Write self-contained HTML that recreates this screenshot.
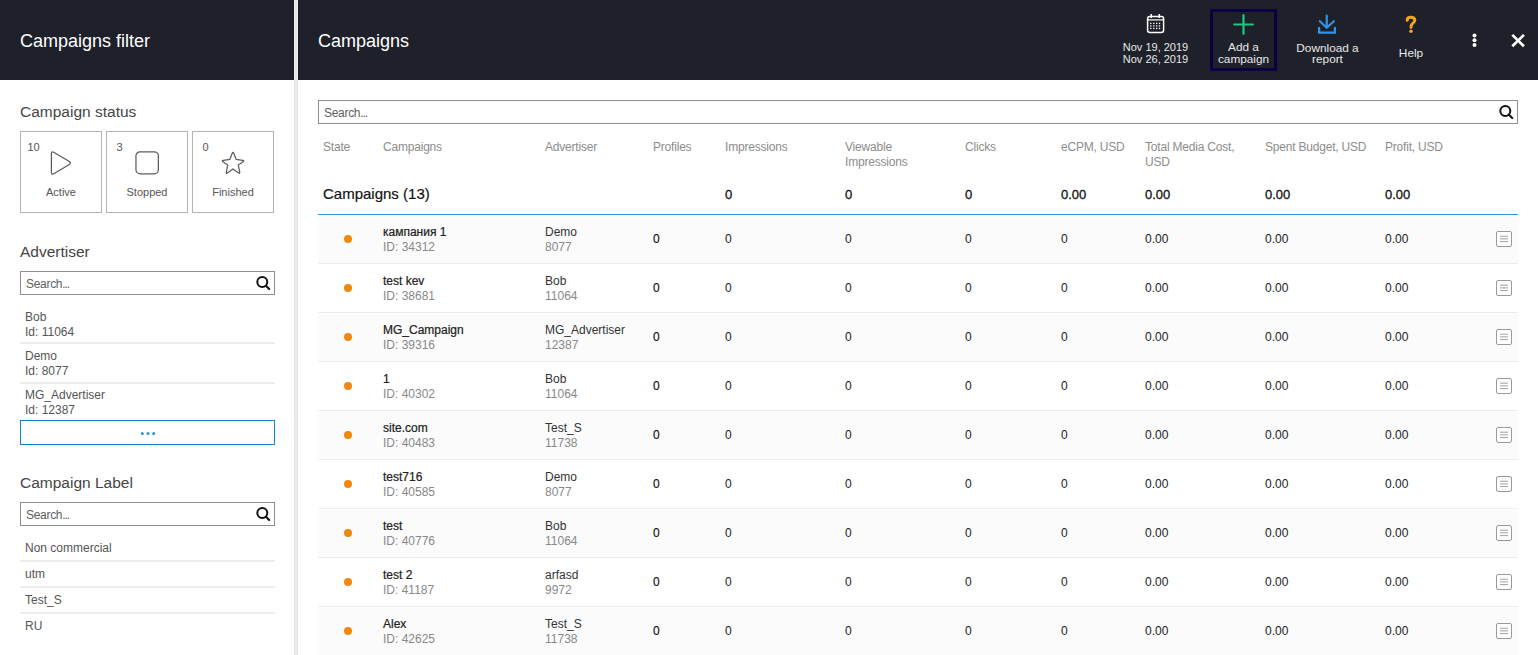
<!DOCTYPE html>
<html><head><meta charset="utf-8"><style>
html,body{margin:0;padding:0;background:#fff;width:1538px;height:655px;overflow:hidden}
body{position:relative;font-family:"Liberation Sans",sans-serif}
.a{position:absolute}
.t{position:absolute;white-space:nowrap}
.tc{position:absolute;white-space:nowrap;text-align:center}
</style></head><body>
<div class="a" style="left:0px;top:0px;width:294px;height:80px;background:#1e212a"></div>
<div class="a" style="left:294px;top:0px;width:4px;height:655px;background:#e9e9e9"></div>
<div class="a" style="left:298px;top:0px;width:1240px;height:80px;background:#1e212a"></div>
<div class="t" style="left:20px;top:30.41px;font-size:18px;line-height:22.5px;color:#fff;font-weight:400;">Campaigns filter</div>
<div class="t" style="left:318px;top:30.41px;font-size:18px;line-height:22.5px;color:#fff;font-weight:400;">Campaigns</div>
<div class="t" style="left:20px;top:101.94px;font-size:15.5px;line-height:19.38px;color:#454545;font-weight:400;">Campaign status</div>
<div class="a" style="left:20px;top:131px;width:82px;height:82px;box-sizing:border-box;border:1px solid #b4b4b4"></div>
<div class="tc" style="left:23.5px;width:20px;top:141.31px;font-size:11px;line-height:13.75px;color:#555">10</div>
<div class="tc" style="left:20px;width:82px;top:186.11px;font-size:11px;line-height:13.75px;color:#555">Active</div>
<svg class="a" style="left:49px;top:149px" width="24" height="28" viewBox="0 0 24 28"><path d="M2.4 4.6 Q2.4 2 4.7 3.3 L20.4 12.5 Q22.3 14 20.4 15.5 L4.7 24.7 Q2.4 26 2.4 23.4 Z" fill="none" stroke="#5c5c5c" stroke-width="1.25"/></svg>
<div class="a" style="left:106px;top:131px;width:82px;height:82px;box-sizing:border-box;border:1px solid #b4b4b4"></div>
<div class="tc" style="left:109.5px;width:20px;top:141.31px;font-size:11px;line-height:13.75px;color:#555">3</div>
<div class="tc" style="left:106px;width:82px;top:186.11px;font-size:11px;line-height:13.75px;color:#555">Stopped</div>
<svg class="a" style="left:134px;top:149px" width="26" height="28" viewBox="0 0 26 28"><rect x="1.95" y="2.85" width="22.4" height="21.9" rx="4" fill="none" stroke="#5c5c5c" stroke-width="1.25"/></svg>
<div class="a" style="left:192px;top:131px;width:82px;height:82px;box-sizing:border-box;border:1px solid #b4b4b4"></div>
<div class="tc" style="left:195.5px;width:20px;top:141.31px;font-size:11px;line-height:13.75px;color:#555">0</div>
<div class="tc" style="left:192px;width:82px;top:186.11px;font-size:11px;line-height:13.75px;color:#555">Finished</div>
<svg class="a" style="left:219px;top:149px" width="28" height="28" viewBox="0 0 28 28"><path d="M13.22 4.30Q14 2.3 14.78 4.30L17.1 10.3L23.55 11.43Q25.7 11.8 24.10 12.85L19.3 16L20.65 22.83Q21.1 25.1 19.33 23.80L14 19.9L8.68 23.80Q6.9 25.1 7.35 22.83L8.7 16L3.90 12.85Q2.3 11.8 4.45 11.43L10.9 10.3Z" fill="none" stroke="#5c5c5c" stroke-width="1.25" stroke-linejoin="round"/></svg>
<div class="t" style="left:20px;top:241.94px;font-size:15.5px;line-height:19.38px;color:#454545;font-weight:400;">Advertiser</div>
<div class="a" style="left:20px;top:271px;width:255px;height:24px;box-sizing:border-box;border:1px solid #8f8f8f;background:#fff"></div><div class="t" style="left:26px;top:277.34px;font-size:12px;line-height:15.0px;color:#606060;font-weight:400;"><span style="letter-spacing:-0.3px">Search</span><span style="letter-spacing:-1.1px">..</span>.</div><svg class="a" style="left:255px;top:276px" width="16" height="15" viewBox="0 0 16 15"><circle cx="7.3" cy="6.1" r="5.0" fill="none" stroke="#111" stroke-width="2"/><path d="M10.9 9.7 L14.2 13" stroke="#111" stroke-width="2.1" stroke-linecap="round"/></svg>
<div class="t" style="left:25px;top:310.34px;font-size:12px;line-height:15.0px;color:#555;font-weight:400;">Bob</div>
<div class="t" style="left:25px;top:325.34px;font-size:12px;line-height:15.0px;color:#555;font-weight:400;">Id: 11064</div>
<div class="a" style="left:20px;top:342px;width:255px;height:2px;background:#ededed"></div>
<div class="t" style="left:25px;top:348.74px;font-size:12px;line-height:15.0px;color:#555;font-weight:400;">Demo</div>
<div class="t" style="left:25px;top:363.84px;font-size:12px;line-height:15.0px;color:#555;font-weight:400;">Id: 8077</div>
<div class="a" style="left:20px;top:381.5px;width:255px;height:2px;background:#ededed"></div>
<div class="t" style="left:25px;top:387.74px;font-size:12px;line-height:15.0px;color:#555;font-weight:400;">MG_Advertiser</div>
<div class="t" style="left:25px;top:403.34px;font-size:12px;line-height:15.0px;color:#555;font-weight:400;">Id: 12387</div>
<div class="a" style="left:20px;top:420px;width:255px;height:25px;box-sizing:border-box;border:1px solid #0a86cf"></div>
<svg class="a" style="left:139px;top:430px" width="18" height="6"><circle cx="3.3" cy="3.5" r="1.5" fill="#3590dc"/><circle cx="9" cy="3.5" r="1.5" fill="#3590dc"/><circle cx="14.7" cy="3.5" r="1.5" fill="#3590dc"/></svg>
<div class="t" style="left:20px;top:472.94px;font-size:15.5px;line-height:19.38px;color:#454545;font-weight:400;">Campaign Label</div>
<div class="a" style="left:20px;top:502px;width:255px;height:24px;box-sizing:border-box;border:1px solid #8f8f8f;background:#fff"></div><div class="t" style="left:26px;top:508.34px;font-size:12px;line-height:15.0px;color:#606060;font-weight:400;"><span style="letter-spacing:-0.3px">Search</span><span style="letter-spacing:-1.1px">..</span>.</div><svg class="a" style="left:255px;top:507px" width="16" height="15" viewBox="0 0 16 15"><circle cx="7.3" cy="6.1" r="5.0" fill="none" stroke="#111" stroke-width="2"/><path d="M10.9 9.7 L14.2 13" stroke="#111" stroke-width="2.1" stroke-linecap="round"/></svg>
<div class="t" style="left:25px;top:541.34px;font-size:12px;line-height:15.0px;color:#555;font-weight:400;">Non commercial</div>
<div class="a" style="left:20px;top:560px;width:255px;height:2px;background:#ededed"></div>
<div class="t" style="left:25px;top:567.34px;font-size:12px;line-height:15.0px;color:#555;font-weight:400;">utm</div>
<div class="a" style="left:20px;top:586px;width:255px;height:2px;background:#ededed"></div>
<div class="t" style="left:25px;top:592.94px;font-size:12px;line-height:15.0px;color:#555;font-weight:400;">Test_S</div>
<div class="a" style="left:20px;top:612px;width:255px;height:2px;background:#ededed"></div>
<div class="t" style="left:25px;top:619.34px;font-size:12px;line-height:15.0px;color:#555;font-weight:400;">RU</div>
<div class="a" style="left:318px;top:100px;width:1200px;height:24px;box-sizing:border-box;border:1px solid #8f8f8f;background:#fff"></div><div class="t" style="left:324px;top:106.34px;font-size:12px;line-height:15.0px;color:#606060;font-weight:400;"><span style="letter-spacing:-0.3px">Search</span><span style="letter-spacing:-1.1px">..</span>.</div><svg class="a" style="left:1498px;top:105px" width="16" height="15" viewBox="0 0 16 15"><circle cx="7.3" cy="6.1" r="5.0" fill="none" stroke="#111" stroke-width="2"/><path d="M10.9 9.7 L14.2 13" stroke="#111" stroke-width="2.1" stroke-linecap="round"/></svg>
<div class="t" style="left:323px;top:139.94px;font-size:12px;line-height:15px;color:#8c8c8c;font-weight:400;letter-spacing:-0.2px">State</div>
<div class="t" style="left:383px;top:139.94px;font-size:12px;line-height:15px;color:#8c8c8c;font-weight:400;letter-spacing:-0.2px">Campaigns</div>
<div class="t" style="left:545px;top:139.94px;font-size:12px;line-height:15px;color:#8c8c8c;font-weight:400;letter-spacing:-0.2px">Advertiser</div>
<div class="t" style="left:653px;top:139.94px;font-size:12px;line-height:15px;color:#8c8c8c;font-weight:400;letter-spacing:-0.2px">Profiles</div>
<div class="t" style="left:725px;top:139.94px;font-size:12px;line-height:15px;color:#8c8c8c;font-weight:400;letter-spacing:-0.2px">Impressions</div>
<div class="t" style="left:845px;top:139.94px;font-size:12px;line-height:15px;color:#8c8c8c;font-weight:400;letter-spacing:-0.2px">Viewable<br>Impressions</div>
<div class="t" style="left:965px;top:139.94px;font-size:12px;line-height:15px;color:#8c8c8c;font-weight:400;letter-spacing:-0.2px">Clicks</div>
<div class="t" style="left:1061px;top:139.94px;font-size:12px;line-height:15px;color:#8c8c8c;font-weight:400;letter-spacing:-0.2px">eCPM, USD</div>
<div class="t" style="left:1145px;top:139.94px;font-size:12px;line-height:15px;color:#8c8c8c;font-weight:400;letter-spacing:-0.2px">Total Media Cost,<br>USD</div>
<div class="t" style="left:1265px;top:139.94px;font-size:12px;line-height:15px;color:#8c8c8c;font-weight:400;letter-spacing:-0.2px">Spent Budget, USD</div>
<div class="t" style="left:1385px;top:139.94px;font-size:12px;line-height:15px;color:#8c8c8c;font-weight:400;letter-spacing:-0.2px">Profit, USD</div>
<div class="t" style="left:323px;top:184.93px;font-size:15px;line-height:18.75px;color:#111;font-weight:400;-webkit-text-stroke:0.18px #111">Campaigns (13)</div>
<div class="t" style="left:725px;top:186.87px;font-size:13px;line-height:16.25px;color:#111;font-weight:400;-webkit-text-stroke:0.3px #111">0</div>
<div class="t" style="left:845px;top:186.87px;font-size:13px;line-height:16.25px;color:#111;font-weight:400;-webkit-text-stroke:0.3px #111">0</div>
<div class="t" style="left:965px;top:186.87px;font-size:13px;line-height:16.25px;color:#111;font-weight:400;-webkit-text-stroke:0.3px #111">0</div>
<div class="t" style="left:1061px;top:186.87px;font-size:13px;line-height:16.25px;color:#111;font-weight:400;-webkit-text-stroke:0.3px #111">0.00</div>
<div class="t" style="left:1145px;top:186.87px;font-size:13px;line-height:16.25px;color:#111;font-weight:400;-webkit-text-stroke:0.3px #111">0.00</div>
<div class="t" style="left:1265px;top:186.87px;font-size:13px;line-height:16.25px;color:#111;font-weight:400;-webkit-text-stroke:0.3px #111">0.00</div>
<div class="t" style="left:1385px;top:186.87px;font-size:13px;line-height:16.25px;color:#111;font-weight:400;-webkit-text-stroke:0.3px #111">0.00</div>
<div class="a" style="left:318px;top:214px;width:1200px;height:1px;background:#3595dc"></div>
<div class="a" style="left:318px;top:216px;width:1200px;height:47px;background:#fbfbfb"></div>
<div class="a" style="left:318px;top:263px;width:1200px;height:1px;background:#ececec"></div>
<div class="a" style="left:344px;top:235px;width:8px;height:8px;border-radius:50%;background:#f0870f"></div>
<div class="t" style="left:383px;top:225.34px;font-size:12px;line-height:15.0px;color:#222;font-weight:400;-webkit-text-stroke:0.22px #222">кампания 1</div>
<div class="t" style="left:383px;top:240.04px;font-size:12px;line-height:15.0px;color:#888;font-weight:400;">ID: 34312</div>
<div class="t" style="left:545px;top:225.04px;font-size:12px;line-height:15.0px;color:#333;font-weight:400;">Demo</div>
<div class="t" style="left:545px;top:240.04px;font-size:12px;line-height:15.0px;color:#888;font-weight:400;">8077</div>
<div class="t" style="left:653px;top:232.04px;font-size:12px;line-height:15.0px;color:#111;font-weight:400;-webkit-text-stroke:0.15px #111">0</div>
<div class="t" style="left:725px;top:232.04px;font-size:12px;line-height:15.0px;color:#222;font-weight:400;">0</div>
<div class="t" style="left:845px;top:232.04px;font-size:12px;line-height:15.0px;color:#222;font-weight:400;">0</div>
<div class="t" style="left:965px;top:232.04px;font-size:12px;line-height:15.0px;color:#222;font-weight:400;">0</div>
<div class="t" style="left:1061px;top:232.04px;font-size:12px;line-height:15.0px;color:#222;font-weight:400;">0</div>
<div class="t" style="left:1145px;top:232.04px;font-size:12px;line-height:15.0px;color:#222;font-weight:400;">0.00</div>
<div class="t" style="left:1265px;top:232.04px;font-size:12px;line-height:15.0px;color:#222;font-weight:400;">0.00</div>
<div class="t" style="left:1385px;top:232.04px;font-size:12px;line-height:15.0px;color:#222;font-weight:400;">0.00</div>
<svg class="a" style="left:1496px;top:231px" width="16" height="16" viewBox="0 0 16 16"><rect x="0.5" y="0.5" width="15" height="15" rx="1.5" fill="#fff" stroke="#9a9a9a"/><path d="M4 5.2h8M4 7.9h8M4 10.6h8" stroke="#a0a0a0" stroke-width="1"/></svg>
<div class="a" style="left:318px;top:312px;width:1200px;height:1px;background:#ececec"></div>
<div class="a" style="left:344px;top:284px;width:8px;height:8px;border-radius:50%;background:#f0870f"></div>
<div class="t" style="left:383px;top:274.34px;font-size:12px;line-height:15.0px;color:#222;font-weight:400;-webkit-text-stroke:0.22px #222">test kev</div>
<div class="t" style="left:383px;top:289.04px;font-size:12px;line-height:15.0px;color:#888;font-weight:400;">ID: 38681</div>
<div class="t" style="left:545px;top:274.04px;font-size:12px;line-height:15.0px;color:#333;font-weight:400;">Bob</div>
<div class="t" style="left:545px;top:289.04px;font-size:12px;line-height:15.0px;color:#888;font-weight:400;">11064</div>
<div class="t" style="left:653px;top:281.04px;font-size:12px;line-height:15.0px;color:#111;font-weight:400;-webkit-text-stroke:0.15px #111">0</div>
<div class="t" style="left:725px;top:281.04px;font-size:12px;line-height:15.0px;color:#222;font-weight:400;">0</div>
<div class="t" style="left:845px;top:281.04px;font-size:12px;line-height:15.0px;color:#222;font-weight:400;">0</div>
<div class="t" style="left:965px;top:281.04px;font-size:12px;line-height:15.0px;color:#222;font-weight:400;">0</div>
<div class="t" style="left:1061px;top:281.04px;font-size:12px;line-height:15.0px;color:#222;font-weight:400;">0</div>
<div class="t" style="left:1145px;top:281.04px;font-size:12px;line-height:15.0px;color:#222;font-weight:400;">0.00</div>
<div class="t" style="left:1265px;top:281.04px;font-size:12px;line-height:15.0px;color:#222;font-weight:400;">0.00</div>
<div class="t" style="left:1385px;top:281.04px;font-size:12px;line-height:15.0px;color:#222;font-weight:400;">0.00</div>
<svg class="a" style="left:1496px;top:280px" width="16" height="16" viewBox="0 0 16 16"><rect x="0.5" y="0.5" width="15" height="15" rx="1.5" fill="#fff" stroke="#9a9a9a"/><path d="M4 5.2h8M4 7.9h8M4 10.6h8" stroke="#a0a0a0" stroke-width="1"/></svg>
<div class="a" style="left:318px;top:314px;width:1200px;height:47px;background:#fbfbfb"></div>
<div class="a" style="left:318px;top:361px;width:1200px;height:1px;background:#ececec"></div>
<div class="a" style="left:344px;top:333px;width:8px;height:8px;border-radius:50%;background:#f0870f"></div>
<div class="t" style="left:383px;top:323.34px;font-size:12px;line-height:15.0px;color:#222;font-weight:400;-webkit-text-stroke:0.22px #222">MG_Campaign</div>
<div class="t" style="left:383px;top:338.04px;font-size:12px;line-height:15.0px;color:#888;font-weight:400;">ID: 39316</div>
<div class="t" style="left:545px;top:323.04px;font-size:12px;line-height:15.0px;color:#333;font-weight:400;">MG_Advertiser</div>
<div class="t" style="left:545px;top:338.04px;font-size:12px;line-height:15.0px;color:#888;font-weight:400;">12387</div>
<div class="t" style="left:653px;top:330.04px;font-size:12px;line-height:15.0px;color:#111;font-weight:400;-webkit-text-stroke:0.15px #111">0</div>
<div class="t" style="left:725px;top:330.04px;font-size:12px;line-height:15.0px;color:#222;font-weight:400;">0</div>
<div class="t" style="left:845px;top:330.04px;font-size:12px;line-height:15.0px;color:#222;font-weight:400;">0</div>
<div class="t" style="left:965px;top:330.04px;font-size:12px;line-height:15.0px;color:#222;font-weight:400;">0</div>
<div class="t" style="left:1061px;top:330.04px;font-size:12px;line-height:15.0px;color:#222;font-weight:400;">0</div>
<div class="t" style="left:1145px;top:330.04px;font-size:12px;line-height:15.0px;color:#222;font-weight:400;">0.00</div>
<div class="t" style="left:1265px;top:330.04px;font-size:12px;line-height:15.0px;color:#222;font-weight:400;">0.00</div>
<div class="t" style="left:1385px;top:330.04px;font-size:12px;line-height:15.0px;color:#222;font-weight:400;">0.00</div>
<svg class="a" style="left:1496px;top:329px" width="16" height="16" viewBox="0 0 16 16"><rect x="0.5" y="0.5" width="15" height="15" rx="1.5" fill="#fff" stroke="#9a9a9a"/><path d="M4 5.2h8M4 7.9h8M4 10.6h8" stroke="#a0a0a0" stroke-width="1"/></svg>
<div class="a" style="left:318px;top:410px;width:1200px;height:1px;background:#ececec"></div>
<div class="a" style="left:344px;top:382px;width:8px;height:8px;border-radius:50%;background:#f0870f"></div>
<div class="t" style="left:383px;top:372.34px;font-size:12px;line-height:15.0px;color:#222;font-weight:400;-webkit-text-stroke:0.22px #222">1</div>
<div class="t" style="left:383px;top:387.04px;font-size:12px;line-height:15.0px;color:#888;font-weight:400;">ID: 40302</div>
<div class="t" style="left:545px;top:372.04px;font-size:12px;line-height:15.0px;color:#333;font-weight:400;">Bob</div>
<div class="t" style="left:545px;top:387.04px;font-size:12px;line-height:15.0px;color:#888;font-weight:400;">11064</div>
<div class="t" style="left:653px;top:379.04px;font-size:12px;line-height:15.0px;color:#111;font-weight:400;-webkit-text-stroke:0.15px #111">0</div>
<div class="t" style="left:725px;top:379.04px;font-size:12px;line-height:15.0px;color:#222;font-weight:400;">0</div>
<div class="t" style="left:845px;top:379.04px;font-size:12px;line-height:15.0px;color:#222;font-weight:400;">0</div>
<div class="t" style="left:965px;top:379.04px;font-size:12px;line-height:15.0px;color:#222;font-weight:400;">0</div>
<div class="t" style="left:1061px;top:379.04px;font-size:12px;line-height:15.0px;color:#222;font-weight:400;">0</div>
<div class="t" style="left:1145px;top:379.04px;font-size:12px;line-height:15.0px;color:#222;font-weight:400;">0.00</div>
<div class="t" style="left:1265px;top:379.04px;font-size:12px;line-height:15.0px;color:#222;font-weight:400;">0.00</div>
<div class="t" style="left:1385px;top:379.04px;font-size:12px;line-height:15.0px;color:#222;font-weight:400;">0.00</div>
<svg class="a" style="left:1496px;top:378px" width="16" height="16" viewBox="0 0 16 16"><rect x="0.5" y="0.5" width="15" height="15" rx="1.5" fill="#fff" stroke="#9a9a9a"/><path d="M4 5.2h8M4 7.9h8M4 10.6h8" stroke="#a0a0a0" stroke-width="1"/></svg>
<div class="a" style="left:318px;top:412px;width:1200px;height:47px;background:#fbfbfb"></div>
<div class="a" style="left:318px;top:459px;width:1200px;height:1px;background:#ececec"></div>
<div class="a" style="left:344px;top:431px;width:8px;height:8px;border-radius:50%;background:#f0870f"></div>
<div class="t" style="left:383px;top:421.34px;font-size:12px;line-height:15.0px;color:#222;font-weight:400;-webkit-text-stroke:0.22px #222">site.com</div>
<div class="t" style="left:383px;top:436.04px;font-size:12px;line-height:15.0px;color:#888;font-weight:400;">ID: 40483</div>
<div class="t" style="left:545px;top:421.04px;font-size:12px;line-height:15.0px;color:#333;font-weight:400;">Test_S</div>
<div class="t" style="left:545px;top:436.04px;font-size:12px;line-height:15.0px;color:#888;font-weight:400;">11738</div>
<div class="t" style="left:653px;top:428.04px;font-size:12px;line-height:15.0px;color:#111;font-weight:400;-webkit-text-stroke:0.15px #111">0</div>
<div class="t" style="left:725px;top:428.04px;font-size:12px;line-height:15.0px;color:#222;font-weight:400;">0</div>
<div class="t" style="left:845px;top:428.04px;font-size:12px;line-height:15.0px;color:#222;font-weight:400;">0</div>
<div class="t" style="left:965px;top:428.04px;font-size:12px;line-height:15.0px;color:#222;font-weight:400;">0</div>
<div class="t" style="left:1061px;top:428.04px;font-size:12px;line-height:15.0px;color:#222;font-weight:400;">0</div>
<div class="t" style="left:1145px;top:428.04px;font-size:12px;line-height:15.0px;color:#222;font-weight:400;">0.00</div>
<div class="t" style="left:1265px;top:428.04px;font-size:12px;line-height:15.0px;color:#222;font-weight:400;">0.00</div>
<div class="t" style="left:1385px;top:428.04px;font-size:12px;line-height:15.0px;color:#222;font-weight:400;">0.00</div>
<svg class="a" style="left:1496px;top:427px" width="16" height="16" viewBox="0 0 16 16"><rect x="0.5" y="0.5" width="15" height="15" rx="1.5" fill="#fff" stroke="#9a9a9a"/><path d="M4 5.2h8M4 7.9h8M4 10.6h8" stroke="#a0a0a0" stroke-width="1"/></svg>
<div class="a" style="left:318px;top:508px;width:1200px;height:1px;background:#ececec"></div>
<div class="a" style="left:344px;top:480px;width:8px;height:8px;border-radius:50%;background:#f0870f"></div>
<div class="t" style="left:383px;top:470.34px;font-size:12px;line-height:15.0px;color:#222;font-weight:400;-webkit-text-stroke:0.22px #222">test716</div>
<div class="t" style="left:383px;top:485.04px;font-size:12px;line-height:15.0px;color:#888;font-weight:400;">ID: 40585</div>
<div class="t" style="left:545px;top:470.04px;font-size:12px;line-height:15.0px;color:#333;font-weight:400;">Demo</div>
<div class="t" style="left:545px;top:485.04px;font-size:12px;line-height:15.0px;color:#888;font-weight:400;">8077</div>
<div class="t" style="left:653px;top:477.04px;font-size:12px;line-height:15.0px;color:#111;font-weight:400;-webkit-text-stroke:0.15px #111">0</div>
<div class="t" style="left:725px;top:477.04px;font-size:12px;line-height:15.0px;color:#222;font-weight:400;">0</div>
<div class="t" style="left:845px;top:477.04px;font-size:12px;line-height:15.0px;color:#222;font-weight:400;">0</div>
<div class="t" style="left:965px;top:477.04px;font-size:12px;line-height:15.0px;color:#222;font-weight:400;">0</div>
<div class="t" style="left:1061px;top:477.04px;font-size:12px;line-height:15.0px;color:#222;font-weight:400;">0</div>
<div class="t" style="left:1145px;top:477.04px;font-size:12px;line-height:15.0px;color:#222;font-weight:400;">0.00</div>
<div class="t" style="left:1265px;top:477.04px;font-size:12px;line-height:15.0px;color:#222;font-weight:400;">0.00</div>
<div class="t" style="left:1385px;top:477.04px;font-size:12px;line-height:15.0px;color:#222;font-weight:400;">0.00</div>
<svg class="a" style="left:1496px;top:476px" width="16" height="16" viewBox="0 0 16 16"><rect x="0.5" y="0.5" width="15" height="15" rx="1.5" fill="#fff" stroke="#9a9a9a"/><path d="M4 5.2h8M4 7.9h8M4 10.6h8" stroke="#a0a0a0" stroke-width="1"/></svg>
<div class="a" style="left:318px;top:510px;width:1200px;height:47px;background:#fbfbfb"></div>
<div class="a" style="left:318px;top:557px;width:1200px;height:1px;background:#ececec"></div>
<div class="a" style="left:344px;top:529px;width:8px;height:8px;border-radius:50%;background:#f0870f"></div>
<div class="t" style="left:383px;top:519.34px;font-size:12px;line-height:15.0px;color:#222;font-weight:400;-webkit-text-stroke:0.22px #222">test</div>
<div class="t" style="left:383px;top:534.04px;font-size:12px;line-height:15.0px;color:#888;font-weight:400;">ID: 40776</div>
<div class="t" style="left:545px;top:519.04px;font-size:12px;line-height:15.0px;color:#333;font-weight:400;">Bob</div>
<div class="t" style="left:545px;top:534.04px;font-size:12px;line-height:15.0px;color:#888;font-weight:400;">11064</div>
<div class="t" style="left:653px;top:526.04px;font-size:12px;line-height:15.0px;color:#111;font-weight:400;-webkit-text-stroke:0.15px #111">0</div>
<div class="t" style="left:725px;top:526.04px;font-size:12px;line-height:15.0px;color:#222;font-weight:400;">0</div>
<div class="t" style="left:845px;top:526.04px;font-size:12px;line-height:15.0px;color:#222;font-weight:400;">0</div>
<div class="t" style="left:965px;top:526.04px;font-size:12px;line-height:15.0px;color:#222;font-weight:400;">0</div>
<div class="t" style="left:1061px;top:526.04px;font-size:12px;line-height:15.0px;color:#222;font-weight:400;">0</div>
<div class="t" style="left:1145px;top:526.04px;font-size:12px;line-height:15.0px;color:#222;font-weight:400;">0.00</div>
<div class="t" style="left:1265px;top:526.04px;font-size:12px;line-height:15.0px;color:#222;font-weight:400;">0.00</div>
<div class="t" style="left:1385px;top:526.04px;font-size:12px;line-height:15.0px;color:#222;font-weight:400;">0.00</div>
<svg class="a" style="left:1496px;top:525px" width="16" height="16" viewBox="0 0 16 16"><rect x="0.5" y="0.5" width="15" height="15" rx="1.5" fill="#fff" stroke="#9a9a9a"/><path d="M4 5.2h8M4 7.9h8M4 10.6h8" stroke="#a0a0a0" stroke-width="1"/></svg>
<div class="a" style="left:318px;top:606px;width:1200px;height:1px;background:#ececec"></div>
<div class="a" style="left:344px;top:578px;width:8px;height:8px;border-radius:50%;background:#f0870f"></div>
<div class="t" style="left:383px;top:568.34px;font-size:12px;line-height:15.0px;color:#222;font-weight:400;-webkit-text-stroke:0.22px #222">test 2</div>
<div class="t" style="left:383px;top:583.04px;font-size:12px;line-height:15.0px;color:#888;font-weight:400;">ID: 41187</div>
<div class="t" style="left:545px;top:568.04px;font-size:12px;line-height:15.0px;color:#333;font-weight:400;">arfasd</div>
<div class="t" style="left:545px;top:583.04px;font-size:12px;line-height:15.0px;color:#888;font-weight:400;">9972</div>
<div class="t" style="left:653px;top:575.04px;font-size:12px;line-height:15.0px;color:#111;font-weight:400;-webkit-text-stroke:0.15px #111">0</div>
<div class="t" style="left:725px;top:575.04px;font-size:12px;line-height:15.0px;color:#222;font-weight:400;">0</div>
<div class="t" style="left:845px;top:575.04px;font-size:12px;line-height:15.0px;color:#222;font-weight:400;">0</div>
<div class="t" style="left:965px;top:575.04px;font-size:12px;line-height:15.0px;color:#222;font-weight:400;">0</div>
<div class="t" style="left:1061px;top:575.04px;font-size:12px;line-height:15.0px;color:#222;font-weight:400;">0</div>
<div class="t" style="left:1145px;top:575.04px;font-size:12px;line-height:15.0px;color:#222;font-weight:400;">0.00</div>
<div class="t" style="left:1265px;top:575.04px;font-size:12px;line-height:15.0px;color:#222;font-weight:400;">0.00</div>
<div class="t" style="left:1385px;top:575.04px;font-size:12px;line-height:15.0px;color:#222;font-weight:400;">0.00</div>
<svg class="a" style="left:1496px;top:574px" width="16" height="16" viewBox="0 0 16 16"><rect x="0.5" y="0.5" width="15" height="15" rx="1.5" fill="#fff" stroke="#9a9a9a"/><path d="M4 5.2h8M4 7.9h8M4 10.6h8" stroke="#a0a0a0" stroke-width="1"/></svg>
<div class="a" style="left:318px;top:608px;width:1200px;height:47px;background:#fbfbfb"></div>
<div class="a" style="left:318px;top:655px;width:1200px;height:1px;background:#ececec"></div>
<div class="a" style="left:344px;top:627px;width:8px;height:8px;border-radius:50%;background:#f0870f"></div>
<div class="t" style="left:383px;top:617.34px;font-size:12px;line-height:15.0px;color:#222;font-weight:400;-webkit-text-stroke:0.22px #222">Alex</div>
<div class="t" style="left:383px;top:632.04px;font-size:12px;line-height:15.0px;color:#888;font-weight:400;">ID: 42625</div>
<div class="t" style="left:545px;top:617.04px;font-size:12px;line-height:15.0px;color:#333;font-weight:400;">Test_S</div>
<div class="t" style="left:545px;top:632.04px;font-size:12px;line-height:15.0px;color:#888;font-weight:400;">11738</div>
<div class="t" style="left:653px;top:624.04px;font-size:12px;line-height:15.0px;color:#111;font-weight:400;-webkit-text-stroke:0.15px #111">0</div>
<div class="t" style="left:725px;top:624.04px;font-size:12px;line-height:15.0px;color:#222;font-weight:400;">0</div>
<div class="t" style="left:845px;top:624.04px;font-size:12px;line-height:15.0px;color:#222;font-weight:400;">0</div>
<div class="t" style="left:965px;top:624.04px;font-size:12px;line-height:15.0px;color:#222;font-weight:400;">0</div>
<div class="t" style="left:1061px;top:624.04px;font-size:12px;line-height:15.0px;color:#222;font-weight:400;">0</div>
<div class="t" style="left:1145px;top:624.04px;font-size:12px;line-height:15.0px;color:#222;font-weight:400;">0.00</div>
<div class="t" style="left:1265px;top:624.04px;font-size:12px;line-height:15.0px;color:#222;font-weight:400;">0.00</div>
<div class="t" style="left:1385px;top:624.04px;font-size:12px;line-height:15.0px;color:#222;font-weight:400;">0.00</div>
<svg class="a" style="left:1496px;top:623px" width="16" height="16" viewBox="0 0 16 16"><rect x="0.5" y="0.5" width="15" height="15" rx="1.5" fill="#fff" stroke="#9a9a9a"/><path d="M4 5.2h8M4 7.9h8M4 10.6h8" stroke="#a0a0a0" stroke-width="1"/></svg>
<svg class="a" style="left:1145px;top:13px" width="20" height="21" viewBox="0 0 20 21"><rect x="2.6" y="3.6" width="16" height="15.8" rx="2.2" fill="none" stroke="#fff" stroke-width="1.5"/><path d="M6.2 1v4M14.3 1v4" stroke="#fff" stroke-width="1.5"/><path d="M2.6 6.9h16" stroke="#fff" stroke-width="1.2"/><g fill="#fff"><rect x="5.15" y="9.75" width="1.3" height="1.3"/><rect x="8.15" y="9.75" width="1.3" height="1.3"/><rect x="11.05" y="9.75" width="1.3" height="1.3"/><rect x="13.85" y="9.75" width="1.3" height="1.3"/><rect x="5.15" y="12.25" width="1.3" height="1.3"/><rect x="8.15" y="12.25" width="1.3" height="1.3"/><rect x="11.05" y="12.25" width="1.3" height="1.3"/><rect x="13.85" y="12.25" width="1.3" height="1.3"/><rect x="5.15" y="14.75" width="1.3" height="1.3"/><rect x="8.15" y="14.75" width="1.3" height="1.3"/><rect x="11.05" y="14.75" width="1.3" height="1.3"/><rect x="13.85" y="14.75" width="1.3" height="1.3"/></g></svg>
<div class="tc" style="left:1095.5px;width:120px;top:40.91px;font-size:11px;line-height:13.75px;color:#e8e8e8">Nov 19, 2019</div>
<div class="tc" style="left:1095.5px;width:120px;top:53.11px;font-size:11px;line-height:13.75px;color:#e8e8e8">Nov 26, 2019</div>
<div class="a" style="left:1210px;top:9px;width:67px;height:62px;box-sizing:border-box;border:3px solid #0b0042"></div>
<svg class="a" style="left:1233px;top:14px" width="21" height="21"><path d="M10.5 1.2v18.6M1.2 10.5h18.6" stroke="#22c77c" stroke-width="2.2" stroke-linecap="round"/></svg>
<div class="tc" style="left:1183.5px;width:120px;top:40.04px;font-size:11.8px;line-height:14.75px;color:#e8e8e8">Add a</div>
<div class="tc" style="left:1183.5px;width:120px;top:52.14px;font-size:11.8px;line-height:14.75px;color:#e8e8e8">campaign</div>
<svg class="a" style="left:1316px;top:14px" width="22" height="22" viewBox="0 0 22 22"><path d="M10.75 1.6V13.2M3.8 7.2L10.75 13.8L17.9 7.2" fill="none" stroke="#3193e6" stroke-width="2.2" stroke-linecap="round" stroke-linejoin="round"/><path d="M3.1 14V18.7H18.9V14" fill="none" stroke="#3193e6" stroke-width="2.3" stroke-linecap="round"/></svg>
<div class="tc" style="left:1267.5px;width:120px;top:40.54px;font-size:11.8px;line-height:14.75px;color:#e8e8e8">Download a</div>
<div class="tc" style="left:1267.5px;width:120px;top:52.14px;font-size:11.8px;line-height:14.75px;color:#e8e8e8">report</div>
<svg class="a" style="left:1404px;top:15px" width="14" height="19" viewBox="0 0 14 19"><path d="M3.2 5.2 C3.2 3 4.8 2.3 6.8 2.3 C9 2.3 10.8 3.4 10.8 5.3 C10.8 7.3 9.2 8 8.1 9 C7.3 9.8 7 10.6 7 12.3" fill="none" stroke="#f5a418" stroke-width="3" stroke-linecap="round"/><circle cx="7" cy="16.2" r="1.75" fill="#f5a418"/></svg>
<div class="tc" style="left:1351.0px;width:120px;top:46.34px;font-size:11.8px;line-height:14.75px;color:#e8e8e8">Help</div>
<svg class="a" style="left:1471px;top:33px" width="7" height="15"><circle cx="3.5" cy="2.5" r="2" fill="#fff"/><circle cx="3.5" cy="7.3" r="2" fill="#fff"/><circle cx="3.5" cy="12.1" r="2" fill="#fff"/></svg>
<svg class="a" style="left:1510px;top:33px" width="16" height="15"><path d="M2.3 1.9L13.9 13.2M13.9 1.9L2.3 13.2" stroke="#fff" stroke-width="2.7"/></svg>
</body></html>
